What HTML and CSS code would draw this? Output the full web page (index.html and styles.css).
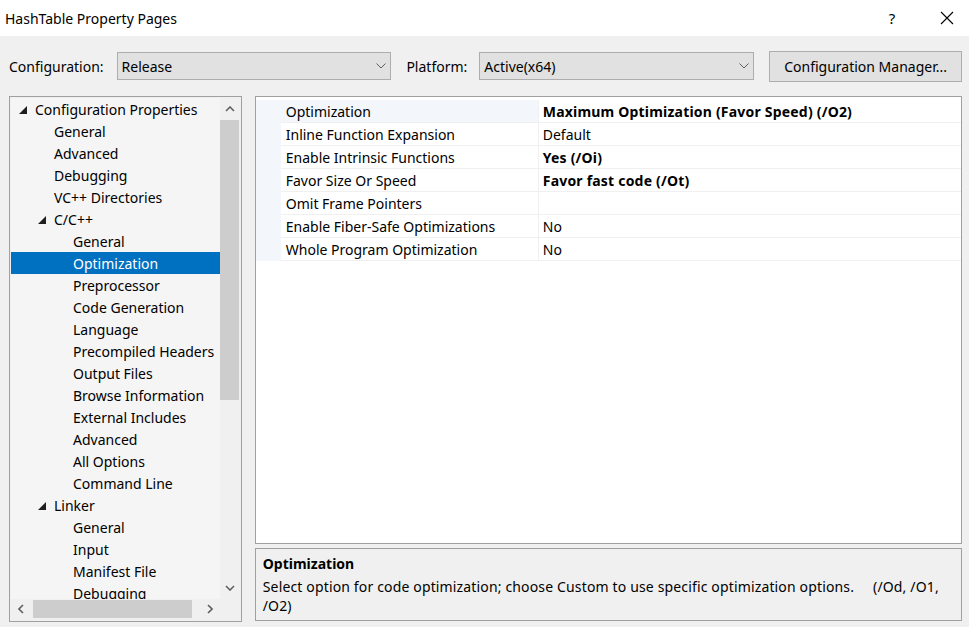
FILE: index.html
```html
<!DOCTYPE html>
<html>
<head>
<meta charset="utf-8">
<link rel="stylesheet" href="styles.css">
</head>
<body>
<div class="window">
  <div class="titlebar">
    <span class="title">HashTable Property Pages</span>
    <span class="help">?</span>
    <span class="close"><svg width="14" height="14" viewBox="0 0 14 14"><path d="M1 1L13 13M13 1L1 13" stroke="#000" stroke-width="1.1" fill="none"/></svg></span>
  </div>
  <div class="content">
    <div class="toprow">
      <span class="label">Configuration:</span>
      <div class="combo combo-config"><span>Release</span><svg class="chev" width="10" height="6" viewBox="0 0 10 6"><path d="M0.5 0.5L5 5L9.5 0.5" stroke="#606060" fill="none"/></svg></div>
      <span class="label label-platform">Platform:</span>
      <div class="combo combo-platform"><span>Active(x64)</span><svg class="chev" width="10" height="6" viewBox="0 0 10 6"><path d="M0.5 0.5L5 5L9.5 0.5" stroke="#606060" fill="none"/></svg></div>
      <div class="button">Configuration Manager...</div>
    </div>
    <div class="panels">
      <div class="tree">
        <div class="tree-view">
          <div class="node l0"><span class="tri"></span>Configuration Properties</div>
          <div class="node l1">General</div>
          <div class="node l1">Advanced</div>
          <div class="node l1">Debugging</div>
          <div class="node l1">VC++ Directories</div>
          <div class="node l1e"><span class="tri"></span>C/C++</div>
          <div class="node l2">General</div>
          <div class="node l2 sel">Optimization</div>
          <div class="node l2">Preprocessor</div>
          <div class="node l2">Code Generation</div>
          <div class="node l2">Language</div>
          <div class="node l2">Precompiled Headers</div>
          <div class="node l2">Output Files</div>
          <div class="node l2">Browse Information</div>
          <div class="node l2">External Includes</div>
          <div class="node l2">Advanced</div>
          <div class="node l2">All Options</div>
          <div class="node l2">Command Line</div>
          <div class="node l1e"><span class="tri"></span>Linker</div>
          <div class="node l2">General</div>
          <div class="node l2">Input</div>
          <div class="node l2">Manifest File</div>
          <div class="node l2">Debugging</div>
        </div>
        <div class="vscroll">
          <svg class="arr" width="10" height="6" viewBox="0 0 10 6"><path d="M1 5L5 1L9 5" stroke="#606060" stroke-width="1.6" fill="none"/></svg>
          <div class="vtrack"><div class="vthumb"></div></div>
          <svg class="arr" width="10" height="6" viewBox="0 0 10 6"><path d="M1 1L5 5L9 1" stroke="#606060" stroke-width="1.6" fill="none"/></svg>
        </div>
        <div class="hscroll">
          <svg class="harr" width="6" height="10" viewBox="0 0 6 10"><path d="M5 1L1 5L5 9" stroke="#606060" stroke-width="1.6" fill="none"/></svg>
          <div class="htrack"><div class="hthumb"></div></div>
          <svg class="harr" width="6" height="10" viewBox="0 0 6 10"><path d="M1 1L5 5L1 9" stroke="#606060" stroke-width="1.6" fill="none"/></svg>
        </div>
        <div class="corner"></div>
      </div>
      <div class="right">
        <div class="grid">
          <div class="row selrow"><div class="gut"></div><div class="name">Optimization</div><div class="val b">Maximum Optimization (Favor Speed) (/O2)</div></div>
          <div class="row"><div class="gut"></div><div class="name">Inline Function Expansion</div><div class="val">Default</div></div>
          <div class="row"><div class="gut"></div><div class="name">Enable Intrinsic Functions</div><div class="val b">Yes (/Oi)</div></div>
          <div class="row"><div class="gut"></div><div class="name">Favor Size Or Speed</div><div class="val b">Favor fast code (/Ot)</div></div>
          <div class="row"><div class="gut"></div><div class="name">Omit Frame Pointers</div><div class="val"></div></div>
          <div class="row"><div class="gut"></div><div class="name">Enable Fiber-Safe Optimizations</div><div class="val">No</div></div>
          <div class="row"><div class="gut"></div><div class="name">Whole Program Optimization</div><div class="val">No</div></div>
        </div>
        <div class="desc">
          <div class="desc-title">Optimization</div>
          <div class="desc-text">Select option for code optimization; choose Custom to use specific optimization options. &nbsp;&nbsp;&nbsp;&nbsp;(/Od, /O1, /O2)</div>
        </div>
      </div>
    </div>
  </div>
</div>
</body>
</html>
```
FILE: styles.css
```css
* { box-sizing: border-box; }
html, body { margin: 0; padding: 0; }
body {
  width: 969px;
  height: 627px;
  overflow: hidden;
  font-family: "Noto Sans", "Open Sans", sans-serif;
  font-size: 14px;
  color: #000;
  background: #f0f0f0;
}
.window { width: 969px; height: 627px; display: flex; flex-direction: column; }
.titlebar {
  height: 36px;
  background: #fff;
  display: flex;
  align-items: center;
  padding-left: 5px;
  font-size: 14px;
}
.title { flex: 1; }
.help { width: 20px; margin-right: 38px; font-size: 15px; text-align: center; }
.close { width: 14px; margin-right: 15px; display: flex; align-items: center; }
.content {
  flex: 1;
  padding: 15px 7px 0 9px;
  display: flex;
  flex-direction: column;
}
.toprow { display: flex; align-items: center; height: 30px; }
.label { margin-right: 13px; }
.label-platform { margin-left: 15px; margin-right: 12px; }
.combo {
  height: 28px;
  border: 1px solid #adadad;
  background: #e1e1e1;
  display: flex;
  align-items: center;
  justify-content: space-between;
  padding: 0 4px 0 4px;
}
.combo-config { width: 275px; }
.combo-platform { width: 275px; }
.button {
  margin-left: 15px;
  width: 193px;
  height: 31px;
  border: 1px solid #adadad;
  background: #e1e1e1;
  display: flex;
  align-items: center;
  justify-content: center;
}
.panels { display: flex; margin-top: 15px; height: 527px; }
.tree {
  width: 233px;
  height: 526px;
  border: 1px solid #a0a0a0;
  background: #f0f0f0;
  display: grid;
  grid-template-columns: 1fr 20px;
  grid-template-rows: 1fr 20px;
  padding: 1px 1px 2px 1px;
}
.tree-view {
  background: #f5f5f5;
  overflow: hidden;
}
.node {
  height: 22px;
  line-height: 24px;
  white-space: nowrap;
  position: relative;
}
.l0 { padding-left: 24px; }
.l1 { padding-left: 43px; }
.l1e { padding-left: 43px; }
.l2 { padding-left: 62px; }
.sel { background: #0070c0; color: #fff; }
.tri {
  position: absolute;
  width: 0; height: 0;
  border-left: 8px solid transparent;
  border-bottom: 8px solid #1e1e1e;
  top: 8px;
}
.l0 .tri { left: 8px; }
.l1e .tri { left: 27px; }
.vscroll {
  display: flex;
  flex-direction: column;
  align-items: center;
}
.arr { margin: 8px 0; }
.vtrack { flex: 1; width: 100%; padding: 0 1px 0 0; }
.vthumb { height: 280px; background: #cdcdcd; }
.hscroll { display: flex; align-items: center; }
.harr { margin: 0 7px; }
.htrack { flex: 1; height: 100%; padding: 1px 0 1px 2px; }
.hthumb { width: 159px; height: 100%; background: #cdcdcd; }
.corner { background: #f0f0f0; }
.right {
  margin-left: 13px;
  width: 708px;
  display: flex;
  flex-direction: column;
}
.grid {
  height: 448px;
  border: 1px solid #a0a0a0;
  background: #fff;
  padding-top: 3px;
}
.row {
  display: flex;
  height: 23px;
}
.gut { width: 25px; background: #f3f6fb; }
.name {
  width: 258px;
  padding-left: 5px;
  line-height: 24px;
  border-bottom: 1px solid #f0f0f0;
  border-right: 1px solid #f0f0f0;
  white-space: nowrap;
  overflow: hidden;
}
.selrow .name { background: #f3f6fb; }
.val {
  flex: 1;
  padding-left: 4px;
  line-height: 24px;
  border-bottom: 1px solid #f0f0f0;
  white-space: nowrap;
  overflow: hidden;
}
.b { font-weight: bold; letter-spacing: 0.2px; }
.desc {
  margin-top: 4px;
  height: 73px;
  border: 1px solid #a0a0a0;
  background: #f0f0f0;
  padding: 4px 7px;
}
.desc-title { font-weight: bold; line-height: 21px; }
.desc-text { margin-top: 3px; line-height: 19px; letter-spacing: 0.15px; }
```
